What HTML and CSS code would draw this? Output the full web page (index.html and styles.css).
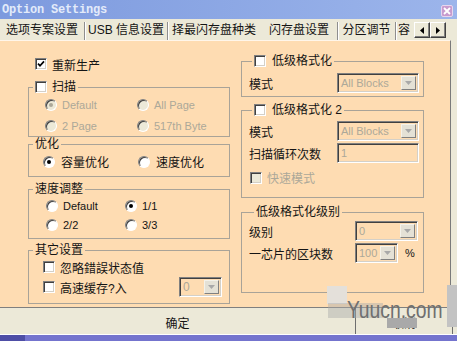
FILE: index.html
```html
<!DOCTYPE html>
<html lang="zh-CN">
<head>
    <meta charset="UTF-8">
    <meta name="viewport" content="width=device-width, initial-scale=1.0">
    <title>Option Settings</title>

    <link rel="stylesheet" href="styles.css">
</head>
<body>
    <div class="window">
        <div class="titlebar">
            <span class="title">Option Settings</span>
            <span class="close">
                <svg width="8" height="8" viewBox="0 0 8 8"><path d="M1 1L7 7M7 1L1 7" stroke="#fff" stroke-width="1.8"/></svg>
            </span>
        </div>

        <div class="tabs">
            <div class="tab t1">选项专案设置</div>
            <div class="tab t2">USB 信息设置</div>
            <div class="tab t3 no-sep">择最闪存盘种类</div>
            <div class="tab t4 active">闪存盘设置</div>
            <div class="tab t5">分区调节</div>
            <div class="tab t6">容</div>
            <div class="tab-arrows">
                <span class="arrow"><svg width="4" height="7" viewBox="0 0 4 7"><path d="M4 0V7L0 3.5Z" fill="#000"/></svg></span>
                <span class="arrow"><svg width="4" height="7" viewBox="0 0 4 7"><path d="M0 0V7L4 3.5Z" fill="#000"/></svg></span>
            </div>
        </div>

        <div class="panel">
            <div class="col col-left">
                <div class="opt top-opt">
                    <span class="cb"><svg width="8" height="8" viewBox="0 0 8 8"><path d="M1 3.6L3 5.8L7 1.4" stroke="#000" stroke-width="1.7" fill="none"/></svg></span>
                    重新生产
                </div>

                <fieldset class="group g-scan">
                    <legend><span class="cb"></span>扫描</legend>
                    <div class="radio-grid">
                        <span class="opt off"><span class="rb on"></span><span class="latin">Default</span></span>
                        <span class="opt off"><span class="rb"></span><span class="latin">All Page</span></span>
                        <span class="opt off"><span class="rb"></span><span class="latin">2 Page</span></span>
                        <span class="opt off"><span class="rb"></span><span class="latin">517th Byte</span></span>
                    </div>
                </fieldset>

                <fieldset class="group g-opt">
                    <legend>优化</legend>
                    <div class="radio-grid">
                        <span class="opt"><span class="rb on"></span>容量优化</span>
                        <span class="opt"><span class="rb"></span>速度优化</span>
                    </div>
                </fieldset>

                <fieldset class="group g-speed">
                    <legend>速度调整</legend>
                    <div class="radio-grid">
                        <span class="opt"><span class="rb"></span><span class="latin">Default</span></span>
                        <span class="opt"><span class="rb on"></span><span class="latin">1/1</span></span>
                        <span class="opt"><span class="rb"></span><span class="latin">2/2</span></span>
                        <span class="opt"><span class="rb"></span><span class="latin">3/3</span></span>
                    </div>
                </fieldset>

                <fieldset class="group g-other">
                    <legend>其它设置</legend>
                    <div class="rows">
                        <div class="opt"><span class="cb"></span>忽略錯誤状态值</div>
                        <div class="opt">
                            <span class="cb"></span>高速缓存?入
                            <span class="combo c-small">
                                <span class="val">0</span>
                                <span class="drop"><svg width="7" height="4" viewBox="0 0 7 4"><path d="M0 0H7L3.5 4Z" fill="#a8a8a8"/></svg></span>
                            </span>
                        </div>
                    </div>
                </fieldset>
            </div>

            <div class="col col-right">
                <fieldset class="group g-fmt1">
                    <legend><span class="cb"></span>低级格式化</legend>
                    <div class="field">
                        <span class="lbl">模式</span>
                        <span class="combo c-wide">
                            <span class="val latin">All Blocks</span>
                            <span class="drop"><svg width="7" height="4" viewBox="0 0 7 4"><path d="M0 0H7L3.5 4Z" fill="#a8a8a8"/></svg></span>
                        </span>
                    </div>
                </fieldset>

                <fieldset class="group g-fmt2">
                    <legend><span class="cb"></span>低级格式化 2</legend>
                    <div class="field">
                        <span class="lbl">模式</span>
                        <span class="combo c-wide">
                            <span class="val latin">All Blocks</span>
                            <span class="drop"><svg width="7" height="4" viewBox="0 0 7 4"><path d="M0 0H7L3.5 4Z" fill="#a8a8a8"/></svg></span>
                        </span>
                    </div>
                    <div class="field">
                        <span class="lbl">扫描循环次数</span>
                        <span class="textbox c-wide"><span class="val latin">1</span></span>
                    </div>
                    <div class="opt off quick"><span class="cb"></span>快速模式</div>
                </fieldset>

                <fieldset class="group g-level">
                    <legend>低级格式化级别</legend>
                    <div class="field">
                        <span class="lbl">级别</span>
                        <span class="combo c-mid">
                            <span class="val latin">0</span>
                            <span class="drop"><svg width="7" height="4" viewBox="0 0 7 4"><path d="M0 0H7L3.5 4Z" fill="#a8a8a8"/></svg></span>
                        </span>
                    </div>
                    <div class="field">
                        <span class="lbl">一芯片的区块数</span>
                        <span class="combo c-small">
                            <span class="val latin">100</span>
                            <span class="drop"><svg width="7" height="4" viewBox="0 0 7 4"><path d="M0 0H7L3.5 4Z" fill="#a8a8a8"/></svg></span>
                        </span>
                        <span class="pct latin">%</span>
                    </div>
                </fieldset>
            </div>
        </div>

        <div class="buttons">
            <div class="btn ok">确定</div>
            <div class="btn cancel">取消</div>
        </div>
        <div class="taskbar"></div>

        <div class="watermark">
            <span class="wm-patch p1"></span>
            <span class="wm-patch p2"></span>
            <span class="wm-patch p3"></span>
            <span class="wm-patch p4"></span>
            <span class="wm-text">Yuucn.com</span>
        </div>
    </div>
</body>
</html>
```

FILE: styles.css
```css
* {
    box-sizing: border-box;
}

html, body {
    margin: 0;
}

body {
    width: 457px;
    height: 341px;
    overflow: hidden;
    background-color: #ece9d8;
    font-family: "Liberation Sans", "Noto Sans CJK SC", sans-serif;
    font-size: 12px;
    color: #141414;
}

.window {
    position: relative;
    display: flex;
    flex-direction: column;
    height: 341px;
}

/* title bar */
.titlebar {
    flex: none;
    height: 19px;
    display: flex;
    justify-content: space-between;
    align-items: flex-start;
    padding: 4px 4px 0 2px;
    background: linear-gradient(to right, #7d9ade, #9cb5eb);
}

.title {
    font-family: "Liberation Mono", monospace;
    font-weight: bold;
    font-size: 12px;
    line-height: 13px;
    letter-spacing: -0.2px;
    color: #e3ebfa;
}

.close {
    width: 12px;
    height: 12px;
    margin-top: 1px;
    display: flex;
    align-items: center;
    justify-content: center;
    background-color: #c79bce;
    border: 1px solid #e6d6ee;
    border-radius: 2px;
}

/* tabs */
.tabs {
    flex: none;
    height: 21px;
    display: flex;
    align-items: flex-end;
    background-color: #ece9d8;
}

.tab {
    height: 18px;
    padding-top: 1px;
    line-height: 14px;
    text-align: center;
    white-space: nowrap;
    overflow: hidden;
    border-right: 1px solid #8e8e8e;
    box-shadow: 1px 0 #fff;
}

.tab.no-sep {
    border-right-color: transparent;
    box-shadow: none;
}

.t1 { width: 85px; }
.t2 { width: 83px; }
.t3 { width: 93px; }
.t4 { width: 77px; }
.t5 { width: 58px; }

.t6 {
    width: 18px;
    text-align: left;
    padding-left: 2px;
    border-right: 0;
    box-shadow: none;
}

.tab-arrows {
    display: flex;
    margin-bottom: 2px;
}

.arrow {
    width: 16px;
    height: 16px;
    display: flex;
    align-items: center;
    justify-content: center;
    background-color: #ece9d8;
    border: 1px solid;
    border-color: #fff #404040 #404040 #fff;
    box-shadow: inset -1px -1px #808080;
}

/* main panel */
.panel {
    flex: 1;
    display: flex;
    gap: 11px;
    margin-right: 6px;
    padding-left: 28px;
    background-color: #fedcb2;
    border-top: 1px solid #fff6ea;
    border-right: 1px solid #7a7a7a;
}

.col-left {
    width: 202px;
}

.col-right {
    width: 183px;
}

.group {
    margin: 0;
    padding: 0;
    min-width: 0;
    border: 1px solid #a9a398;
}

.group legend {
    display: flex;
    align-items: center;
    gap: 5px;
    height: 14px;
    line-height: 14px;
    margin-left: 4px;
    padding: 0 2px;
}

.col-right .group legend {
    margin-left: 3px;
    gap: 6px;
}

.col-right .g-level legend {
    margin-left: 5px;
}

/* checkbox + radio */
.cb {
    flex: none;
    width: 12px;
    height: 12px;
    display: inline-flex;
    align-items: center;
    justify-content: center;
    background-color: #fff;
    border: 1px solid;
    border-color: #808080 #fff #fff #808080;
    box-shadow: inset 1px 1px #404040, inset -1px -1px #d4d0c8;
}

.rb {
    flex: none;
    width: 12px;
    height: 12px;
    display: inline-flex;
    align-items: center;
    justify-content: center;
    border-radius: 50%;
    background-color: #fff;
    border: 1px solid;
    border-color: #808080 #fff #fff #808080;
    box-shadow: inset 1px 1px #404040;
}

.rb.on::after {
    content: "";
    width: 4px;
    height: 4px;
    border-radius: 50%;
    background-color: #000;
}

.opt {
    display: flex;
    align-items: center;
    gap: 5px;
}

.opt.off {
    color: #aca899;
}

.opt.off .rb,
.opt.off .cb {
    background-color: #ece9d8;
}

.opt.off .rb.on::after {
    background-color: #aca899;
}

.latin {
    font-size: 11px;
}

.radio-grid {
    display: grid;
    align-items: center;
}

/* left column groups */
.top-opt {
    height: 14px;
    margin: 16px 0 9px 7px;
}

.g-scan .radio-grid {
    grid-template-columns: 92px auto;
    grid-auto-rows: 21px;
    padding-left: 16px;
}

.g-opt .radio-grid {
    grid-template-columns: 95px auto;
    grid-auto-rows: 21px;
    padding: 0 0 4px 14px;
}

.g-opt .opt {
    gap: 6px;
}

.g-speed {
    margin-top: 5px;
}

.g-speed .radio-grid {
    grid-template-columns: 79px auto;
    grid-auto-rows: 19px;
    padding: 0 0 4px 17px;
}

.g-other {
    margin-top: 4px;
}

.g-other .rows {
    padding: 0 7px 6px 14px;
}

.g-other .opt {
    height: 20px;
}

.g-other .combo {
    margin-left: auto;
}

/* right column groups */
.field {
    display: flex;
    align-items: center;
    height: 22px;
}

.lbl {
    width: 88px;
    flex: none;
}

.g-fmt1 {
    margin-top: 13px;
    padding: 4px 0 2px 7px;
}

.g-fmt2 {
    margin-top: 6px;
    padding: 3px 0 10px 7px;
}

.quick {
    height: 19px;
    margin: 4px 0 0 1px;
}

.g-level {
    margin-top: 7px;
    padding: 1px 0 28px 7px;
}

.g-level .lbl {
    width: 106px;
}

.pct {
    margin-left: 7px;
}

/* combo boxes */
.combo,
.textbox {
    height: 20px;
    display: flex;
    align-items: center;
    justify-content: space-between;
    padding: 2px;
    border: 1px solid;
    border-color: #808080 #fff #fff #808080;
    box-shadow: inset 1px 1px #404040, inset -1px -1px #d4d0c8;
    color: #aca899;
}

.combo .val,
.textbox .val {
    padding-left: 1px;
}

.drop {
    width: 15px;
    height: 14px;
    display: flex;
    align-items: center;
    justify-content: center;
    background-color: #e4e1d6;
    border: 1px solid;
    border-color: #f4f2ea #808080 #808080 #f4f2ea;
}

.c-wide { width: 82px; }
.c-mid { width: 63px; }
.c-small { width: 43px; }

/* bottom buttons */
.buttons {
    flex: none;
    height: 27px;
    display: flex;
    background-color: #ece9d8;
    border-top: 1px solid #7f7f7f;
}

.btn {
    display: flex;
    align-items: center;
    justify-content: center;
    padding-top: 2px;
    border-right: 1px solid #6e6e6e;
}

.btn.ok { width: 356px; }
.btn.cancel { width: 97px; }

.taskbar {
    flex: none;
    height: 7px;
    border-top: 1px solid #fff;
    background: linear-gradient(to right, #4e4ea6 0 25px, #7474ce 25px);
}

/* site watermark laid over the shot */
.watermark {
    position: absolute;
    inset: 0;
    pointer-events: none;
}

.wm-patch {
    position: absolute;
}

.p1 { left: 327px; top: 286px; width: 20px; height: 18px; background-color: #e4e0da; }
.p2 { left: 328px; top: 303px; width: 55px; height: 15px; background-color: rgba(170, 170, 170, 0.45); }
.p3 { left: 387px; top: 318px; width: 30px; height: 10px; background-color: #a9a9a9; }
.p4 { left: 447px; top: 285px; width: 10px; height: 42px; background-color: #c3c3c3; }

.wm-text {
    position: absolute;
    left: 347px;
    top: 297px;
    font-size: 23px;
    line-height: 26px;
    color: #6f6f6f;
    transform: scaleX(0.84);
    transform-origin: left top;
}
```
